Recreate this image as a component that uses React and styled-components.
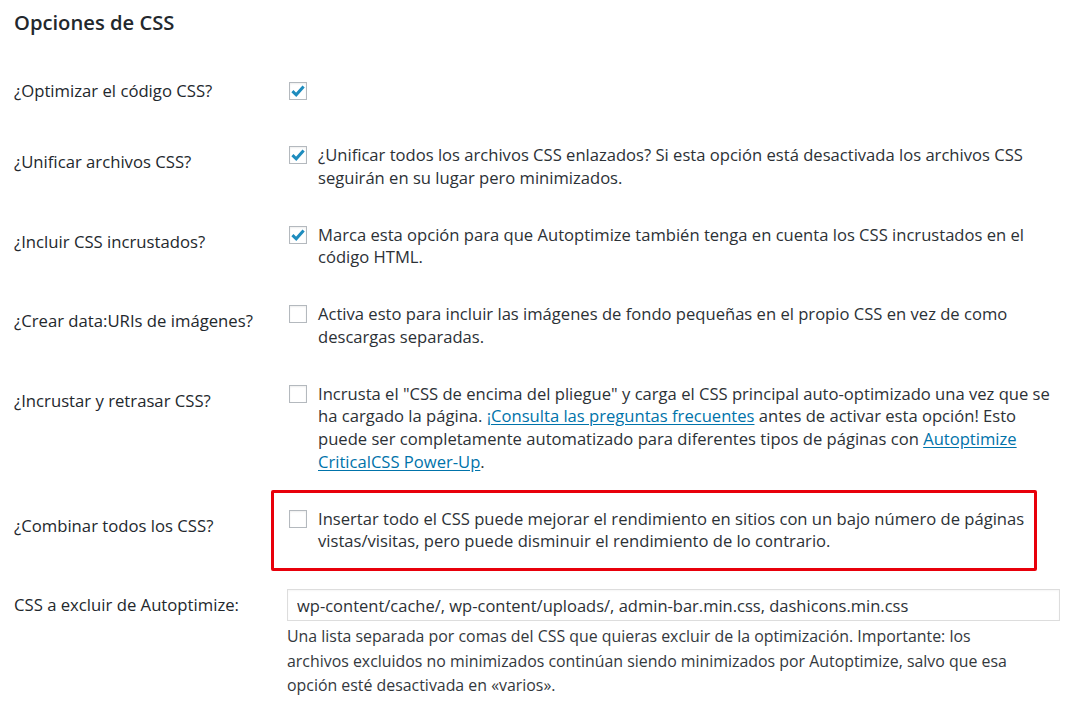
import React from "react";
import styled, { createGlobalStyle } from "styled-components";

const Global = createGlobalStyle`
  html, body { margin: 0; padding: 0; background: #fff; }
  body { font-family: "Open Sans", "Noto Sans", sans-serif; color: #23282d; }
`;

const Page = styled.div`
  width: 1078px;
  height: 724px;
  box-sizing: border-box;
  padding: 9px 0 0 14px;
  overflow: hidden;
`;

const Title = styled.h2`
  margin: 0 0 21px;
  font-size: 20.2px;
  line-height: 26px;
  font-weight: 600;
  color: #23282d;
`;

const Row = styled.div`
  position: relative;
  display: grid;
  grid-template-columns: 273px 1fr;
  align-items: start;
`;

const Label = styled.div`
  padding: 24px 0 25px;
  font-size: 16.7px;
  line-height: 22px;
  color: #23282d;
`;

const Cell = styled.div`
  padding: ${(p) => p.$top || 17}px 0 17px;
  font-size: 16.6px;
  line-height: 22.75px;
  color: #2c3136;
`;

const CheckLine = styled.label`
  display: flex;
  align-items: flex-start;
  gap: 11px;
`;

const Box = styled.span`
  flex: none;
  width: 18px;
  height: 18px;
  box-sizing: border-box;
  margin: 2px 0 0 2px;
  border: 1px solid #b4b9be;
  background: #fff;
  box-shadow: inset 0 1px 2px rgba(0, 0, 0, 0.07);
  display: flex;
  align-items: center;
  justify-content: center;
`;

const Text = styled.span`
  white-space: nowrap;
`;

const Link = styled.a`
  color: #0073aa;
  text-decoration: underline;
  text-underline-offset: 2px;
`;

const Highlight = styled.div`
  position: absolute;
  left: 257px;
  top: -1px;
  width: 766px;
  height: 81px;
  box-sizing: border-box;
  border: 3px solid #e8000b;
  border-radius: 2px;
  pointer-events: none;
`;

const Field = styled.input`
  display: block;
  width: 773px;
  height: 32px;
  box-sizing: border-box;
  margin: 0;
  padding: 0 9px;
  border: 1px solid #ddd;
  box-shadow: inset 0 1px 2px rgba(0, 0, 0, 0.04);
  background: #fff;
  font-family: inherit;
  font-size: 16.5px;
  color: #2c3136;
  outline: none;
`;

const Description = styled.p`
  margin: 3px 0 0;
  font-size: 15.9px;
  line-height: 24.5px;
  color: #33383d;
  white-space: nowrap;
`;

function Check({ checked }) {
  return (
    <Box>
      {checked && (
        <svg width="16" height="16" viewBox="0 0 16 16">
          <path
            d="M2.4 8.2 L6.2 11.8 L13.6 3.4"
            fill="none"
            stroke="#1e8cbe"
            strokeWidth="3"
            strokeLinecap="butt"
            strokeLinejoin="miter"
          />
        </svg>
      )}
    </Box>
  );
}

function OptionRow({ label, checked, children, top, highlight }) {
  return (
    <Row>
      <Label>{label}</Label>
      <Cell $top={top}>
        <CheckLine>
          <Check checked={checked} />
          {children && <Text>{children}</Text>}
        </CheckLine>
      </Cell>
      {highlight && <Highlight />}
    </Row>
  );
}

export default function App() {
  return (
    <>
      <Global />
      <Page>
        <Title>Opciones de CSS</Title>
        <OptionRow label="¿Optimizar el código CSS?" checked top={24} />
        <OptionRow label="¿Unificar archivos CSS?" checked>
          ¿Unificar todos los archivos CSS enlazados? Si esta opción está desactivada los archivos CSS
          <br />
          seguirán en su lugar pero minimizados.
        </OptionRow>
        <OptionRow label="¿Incluir CSS incrustados?" checked>
          Marca esta opción para que Autoptimize también tenga en cuenta los CSS incrustados en el
          <br />
          código HTML.
        </OptionRow>
        <OptionRow label="¿Crear data:URIs de imágenes?">
          Activa esto para incluir las imágenes de fondo pequeñas en el propio CSS en vez de como
          <br />
          descargas separadas.
        </OptionRow>
        <OptionRow label="¿Incrustar y retrasar CSS?">
          Incrusta el "CSS de encima del pliegue" y carga el CSS principal auto-optimizado una vez que se
          <br />
          ha cargado la página. <Link href="#">¡Consulta las preguntas frecuentes</Link> antes de activar esta opción! Esto
          <br />
          puede ser completamente automatizado para diferentes tipos de páginas con{" "}
          <Link href="#">
            Autoptimize
            <br />
            CriticalCSS Power-Up
          </Link>
          .
        </OptionRow>
        <OptionRow label="¿Combinar todos los CSS?" highlight>
          Insertar todo el CSS puede mejorar el rendimiento en sitios con un bajo número de páginas
          <br />
          vistas/visitas, pero puede disminuir el rendimiento de lo contrario.
        </OptionRow>
        <Row>
          <Label>CSS a excluir de Autoptimize:</Label>
          <Cell $top={19}>
            <Field
              readOnly
              value="wp-content/cache/, wp-content/uploads/, admin-bar.min.css, dashicons.min.css"
            />
            <Description>
              Una lista separada por comas del CSS que quieras excluir de la optimización. Importante: los
              <br />
              archivos excluidos no minimizados continúan siendo minimizados por Autoptimize, salvo que esa
              <br />
              opción esté desactivada en «varios».
            </Description>
          </Cell>
        </Row>
      </Page>
    </>
  );
}
